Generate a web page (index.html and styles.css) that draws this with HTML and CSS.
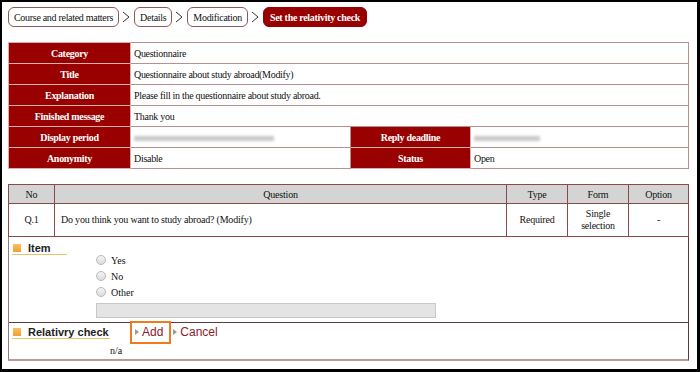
FILE: index.html
```html
<!DOCTYPE html>
<html lang="en">
<head>
  <meta charset="UTF-8">
  <title>Set the relativity check</title>
  <link rel="stylesheet" href="styles.css">
</head>
<body>
  <div class="frame">
    <nav class="crumbs">
      <span class="crumb">Course and related matters</span>
      <svg class="sep" width="15" height="14" viewBox="0 0 15 14"><polyline points="4,2 10,7 4,12" fill="none" stroke="#333" stroke-width="1"/></svg>
      <span class="crumb">Details</span>
      <svg class="sep" width="15" height="14" viewBox="0 0 15 14"><polyline points="4,2 10,7 4,12" fill="none" stroke="#333" stroke-width="1"/></svg>
      <span class="crumb">Modification</span>
      <svg class="sep" width="15" height="14" viewBox="0 0 15 14"><polyline points="4,2 10,7 4,12" fill="none" stroke="#333" stroke-width="1"/></svg>
      <span class="crumb active">Set the relativity check</span>
    </nav>

    <table class="info">
      <colgroup>
        <col style="width:122px">
        <col style="width:220px">
        <col style="width:120px">
        <col>
      </colgroup>
      <tr><th>Category</th><td colspan="3">Questionnaire</td></tr>
      <tr><th>Title</th><td colspan="3">Questionnaire about study abroad(Modify)</td></tr>
      <tr><th>Explanation</th><td colspan="3">Please fill in the questionnaire about study abroad.</td></tr>
      <tr><th>Finished message</th><td colspan="3">Thank you</td></tr>
      <tr>
        <th>Display period</th><td><span class="blur wide"></span></td>
        <th>Reply deadline</th><td><span class="blur"></span></td>
      </tr>
      <tr>
        <th>Anonymity</th><td>Disable</td>
        <th>Status</th><td>Open</td>
      </tr>
    </table>

    <table class="questions">
      <colgroup>
        <col style="width:46px">
        <col>
        <col style="width:61px">
        <col style="width:61px">
        <col style="width:60px">
      </colgroup>
      <tr><th>No</th><th>Question</th><th>Type</th><th>Form</th><th>Option</th></tr>
      <tr>
        <td class="center">Q.1</td>
        <td>Do you think you want to study abroad? (Modify)</td>
        <td class="center">Required</td>
        <td class="center">Single<br>selection</td>
        <td class="center">-</td>
      </tr>
    </table>

    <div class="detail">
      <div class="items">
        <h3 class="heading">Item</h3>
        <ul class="choices">
          <li><span class="radio"></span>Yes</li>
          <li><span class="radio"></span>No</li>
          <li><span class="radio"></span>Other</li>
        </ul>
        <div class="other-input"></div>
      </div>
      <div class="relation">
        <div class="relation-head">
          <h3 class="heading long">Relativry check</h3>
          <div class="actions">
            <a class="action add">Add</a>
            <a class="action">Cancel</a>
          </div>
        </div>
        <p class="na">n/a</p>
      </div>
    </div>
  </div>
</body>
</html>
```

FILE: styles.css
```css
* {
  box-sizing: border-box;
  margin: 0;
  padding: 0;
}

body {
  background: #fff;
  font-family: "Liberation Serif", "Times New Roman", serif;
  font-size: 11px;
  color: #111;
}

.frame {
  width: 700px;
  height: 372px;
  border-style: solid;
  border-color: #000;
  border-width: 2px 3px 3px 2px;
  padding: 5px 8px 0 6px;
}

/* breadcrumbs */
.crumbs {
  display: flex;
  align-items: center;
  height: 20px;
}

.crumb {
  display: inline-flex;
  align-items: center;
  height: 20px;
  padding: 0 5px;
  border: 1px solid #8a5a5a;
  border-radius: 6px;
  font-size: 10px;
  letter-spacing: -0.3px;
}

.crumb.active {
  background: #990000;
  border-color: #990000;
  color: #fff;
  font-weight: bold;
  padding: 0 6px;
}

.sep {
  display: block;
}

/* info table */
.info {
  width: 681px;
  margin-top: 15px;
  border-collapse: collapse;
  table-layout: fixed;
  border: 1px solid #6b4a4a;
}

.info th,
.info td {
  height: 21px;
  border: 1px solid #b89090;
  padding: 0 3px;
  font-size: 10px;
  letter-spacing: -0.3px;
}

.info th {
  background: #990000;
  color: #fff;
  text-align: center;
  border-color: #d8b0b0;
}

.info td {
  text-align: left;
}

.blur {
  display: inline-block;
  width: 66px;
  height: 5px;
  background: #c8c8c8;
  filter: blur(1.5px);
  vertical-align: middle;
}

.blur.wide {
  width: 140px;
}

/* question table */
.questions {
  width: 681px;
  margin-top: 15px;
  border-collapse: collapse;
  table-layout: fixed;
}

.questions th,
.questions td {
  border: 1px solid #8b4a4a;
  font-size: 10px;
  letter-spacing: -0.2px;
  padding: 0 6px;
}

.questions th {
  height: 19px;
  background: #d4d4d4;
  font-weight: normal;
}

.questions td {
  height: 33px;
  line-height: 12px;
}

.questions .center {
  text-align: center;
}

/* item detail */
.detail {
  width: 681px;
  height: 124px;
  border-left: 1px solid #9a7878;
  border-right: 1px solid #5a3a3a;
  border-bottom: 2px solid #b89a9a;
}

.items {
  height: 86px;
  padding: 4px 0 0 3px;
  border-bottom: 1px solid #5a3a3a;
}

.heading {
  display: flex;
  align-items: center;
  gap: 7px;
  width: 55px;
  height: 14px;
  padding-left: 1px;
  border-bottom: 1px solid #e8c468;
  font-family: "Liberation Sans", Arial, sans-serif;
  font-size: 11px;
  font-weight: bold;
  color: #222;
}

.heading::before {
  content: "";
  width: 8px;
  height: 8px;
  background: linear-gradient(#f8c060, #f0a030);
}

.heading.long {
  width: 98px;
}

.choices {
  list-style: none;
  margin: -3px 0 0 84px;
}

.choices li {
  display: flex;
  align-items: center;
  gap: 5px;
  height: 16px;
  font-size: 10px;
}

.radio {
  width: 10px;
  height: 10px;
  border-radius: 50%;
  border: 1px solid #b8b8b8;
  background: linear-gradient(#f4f4f4, #dcdcdc);
}

.other-input {
  width: 340px;
  height: 15px;
  margin: 3px 0 0 84px;
  background: #e4e4e4;
  border: 1px solid #c8c8c8;
}

.relation {
  padding: 0 0 0 3px;
}

.relation-head {
  display: flex;
  align-items: center;
  height: 22px;
  margin-top: -2px;
}

.actions {
  display: flex;
  align-items: center;
  gap: 2px;
  margin-left: 20px;
}

.action {
  display: inline-flex;
  align-items: center;
  gap: 3px;
  font-family: "Liberation Sans", Arial, sans-serif;
  font-size: 12px;
  color: #8b1a2a;
}

.action::before {
  content: "";
  border-left: 4px solid #999;
  border-top: 3px solid transparent;
  border-bottom: 3px solid transparent;
}

.action.add {
  height: 23px;
  padding: 0 6px 0 3px;
  border: 2px solid #f07a20;
}

.na {
  margin: 2px 0 0 98px;
  font-size: 10px;
}
```
